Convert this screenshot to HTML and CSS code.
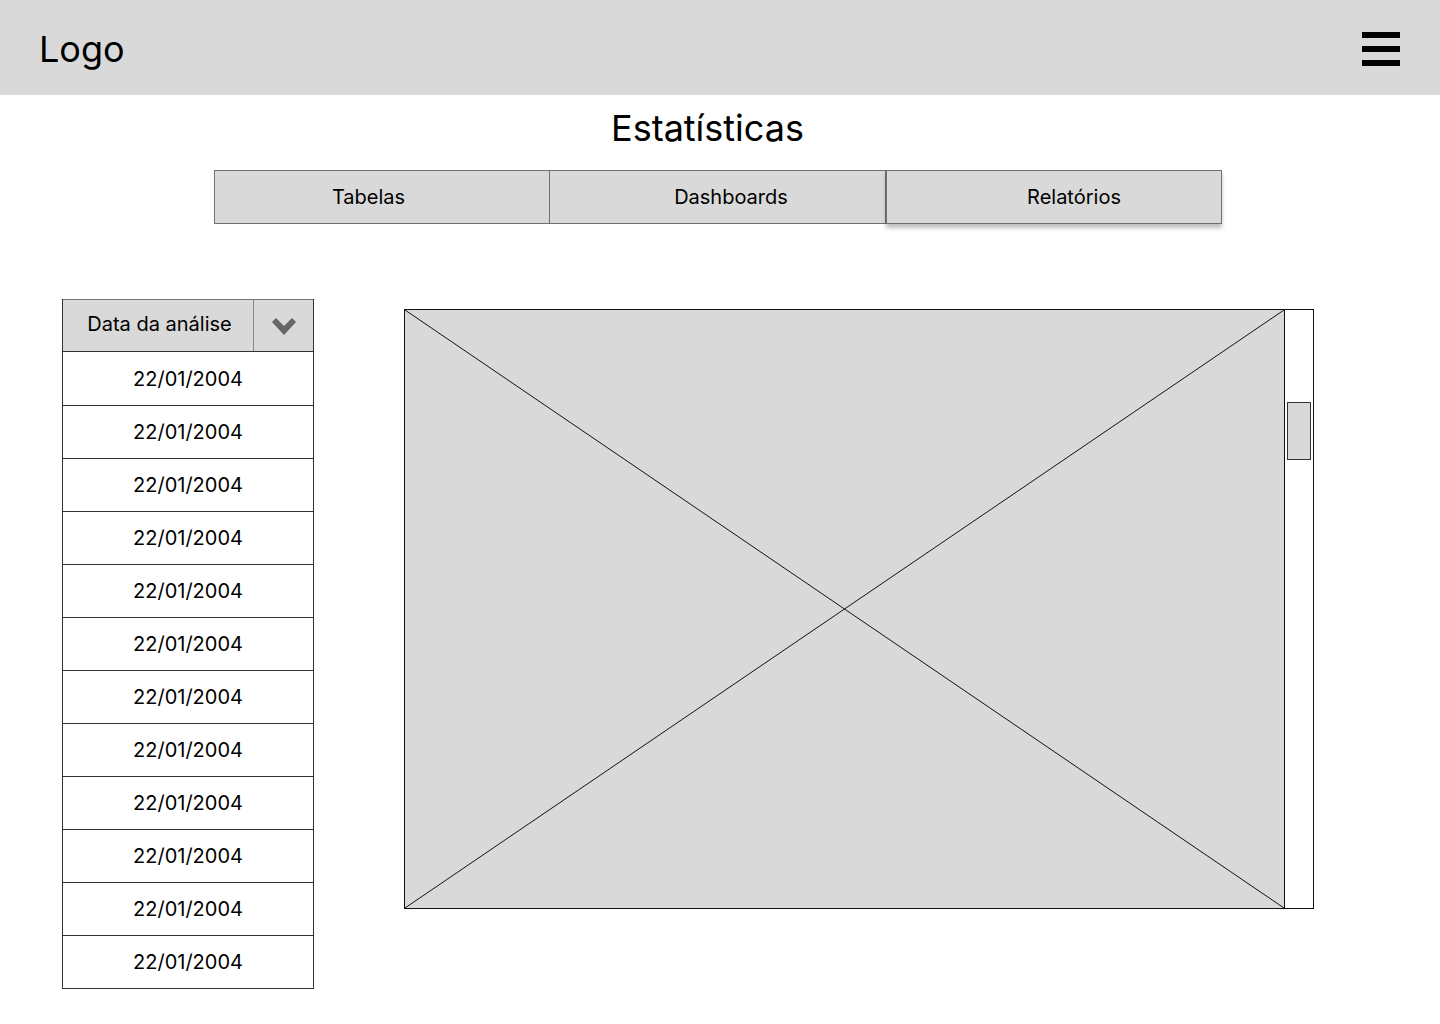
FILE: index.html
```html
<!DOCTYPE html>
<html lang="pt">
<head>
    <meta charset="UTF-8">
    <meta name="viewport" content="width=device-width,initial-scale=1">
    <title>Estatísticas</title>
    <link rel="stylesheet" href="styles.css">
</head>
<body>
<header class="topbar">
    <div class="logo">Logo</div>
    <button class="menu-btn" aria-label="Menu">
        <span></span><span></span><span></span>
    </button>
</header>
<main>
    <h1>Estatísticas</h1>
    <nav class="tabs">
        <div class="tab tab-left">Tabelas</div>
        <div class="tab tab-mid">Dashboards</div>
        <div class="tab tab-active">Relatórios</div>
    </nav>
    <section class="content">
        <div class="date-list">
            <div class="date-head">
                <span class="date-label">Data da análise</span>
                <span class="date-toggle">
                    <svg width="26" height="18" viewBox="0 0 26 18">
                        <path d="M1 4 L5 0 L13 8 L21 0 L25 4 L13 17 Z" fill="#666"/>
                    </svg>
                </span>
            </div>
            <div class="date-row">22/01/2004</div>
            <div class="date-row">22/01/2004</div>
            <div class="date-row">22/01/2004</div>
            <div class="date-row">22/01/2004</div>
            <div class="date-row">22/01/2004</div>
            <div class="date-row">22/01/2004</div>
            <div class="date-row">22/01/2004</div>
            <div class="date-row">22/01/2004</div>
            <div class="date-row">22/01/2004</div>
            <div class="date-row">22/01/2004</div>
            <div class="date-row">22/01/2004</div>
            <div class="date-row">22/01/2004</div>
        </div>
        <div class="viewer">
            <div class="placeholder">
                <svg width="100%" height="100%" viewBox="0 0 880 598" preserveAspectRatio="none">
                    <line x1="0" y1="0" x2="880" y2="598" stroke="#111" stroke-width="1"/>
                    <line x1="880" y1="0" x2="0" y2="598" stroke="#111" stroke-width="1"/>
                </svg>
            </div>
            <div class="scrollbar">
                <div class="thumb"></div>
            </div>
        </div>
    </section>
</main>
</body>
</html>
```

FILE: styles.css
```css
* {
    margin: 0;
    padding: 0;
    box-sizing: border-box;
}

body {
    font-family: Inter, "Noto Sans", sans-serif;
    color: #000;
    background: #fff;
}

.topbar {
    height: 95px;
    background: #d9d9d9;
    display: flex;
    align-items: center;
    justify-content: space-between;
    padding: 0 40px 0 39px;
}

.logo {
    font-size: 36px;
    padding-top: 2px;
}

.menu-btn {
    width: 38px;
    display: flex;
    flex-direction: column;
    gap: 8px;
    border: none;
    background: none;
    padding-top: 2px;
}

.menu-btn span {
    display: block;
    height: 6px;
    background: #000;
}

main {
    padding-top: 11px;
}

h1 {
    font-size: 36px;
    font-weight: 400;
    text-align: center;
    line-height: 44px;
    margin-left: -25px;
}

.tabs {
    display: flex;
    width: 1008px;
    margin: 20px 0 0 214px;
}

.tab {
    flex: 0 0 336px;
    height: 54px;
    background: #d9d9d9;
    border: 1px solid #707070;
    display: flex;
    align-items: center;
    justify-content: center;
    font-size: 20px;
}

.tab + .tab {
    border-left: none;
}

.tab-left {
    padding-right: 27px;
}

.tab-mid {
    padding-left: 27px;
}

.tab-active {
    padding-left: 40px;
    border-left: 1px solid #707070 !important;
    box-shadow: 0 4px 4px rgba(0, 0, 0, 0.25);
}

.content {
    display: flex;
    align-items: flex-start;
    margin: 75px 0 0 62px;
}

.date-list {
    width: 252px;
    border: 1px solid #333;
    border-top: none;
}

.date-head {
    display: flex;
    height: 53px;
    background: #d9d9d9;
    border-top: 1px solid #777;
    border-bottom: 1px solid #333;
}

.date-label {
    width: 190px;
    display: flex;
    align-items: center;
    justify-content: center;
    font-size: 20px;
    padding-bottom: 3px;
    padding-left: 3px;
}

.date-toggle {
    flex: 1;
    border-left: 1px solid #888;
    display: flex;
    align-items: center;
    justify-content: center;
    padding-top: 2px;
}

.date-row {
    height: 53px;
    border-top: 1px solid #333;
    display: flex;
    align-items: center;
    justify-content: center;
    font-size: 20px;
}

.date-head + .date-row {
    border-top: none;
}

.viewer {
    display: flex;
    margin: 10px 0 0 90px;
    width: 910px;
    height: 600px;
    border: 1px solid #111;
}

.placeholder {
    width: 880px;
    height: 598px;
    background: #d9d9d9;
    border-right: 1px solid #111;
}

.placeholder svg {
    display: block;
}

.scrollbar {
    flex: 1;
    background: #fff;
    padding: 92px 2px 0 2px;
}

.thumb {
    height: 58px;
    background: #d9d9d9;
    border: 1px solid #333;
}
```
